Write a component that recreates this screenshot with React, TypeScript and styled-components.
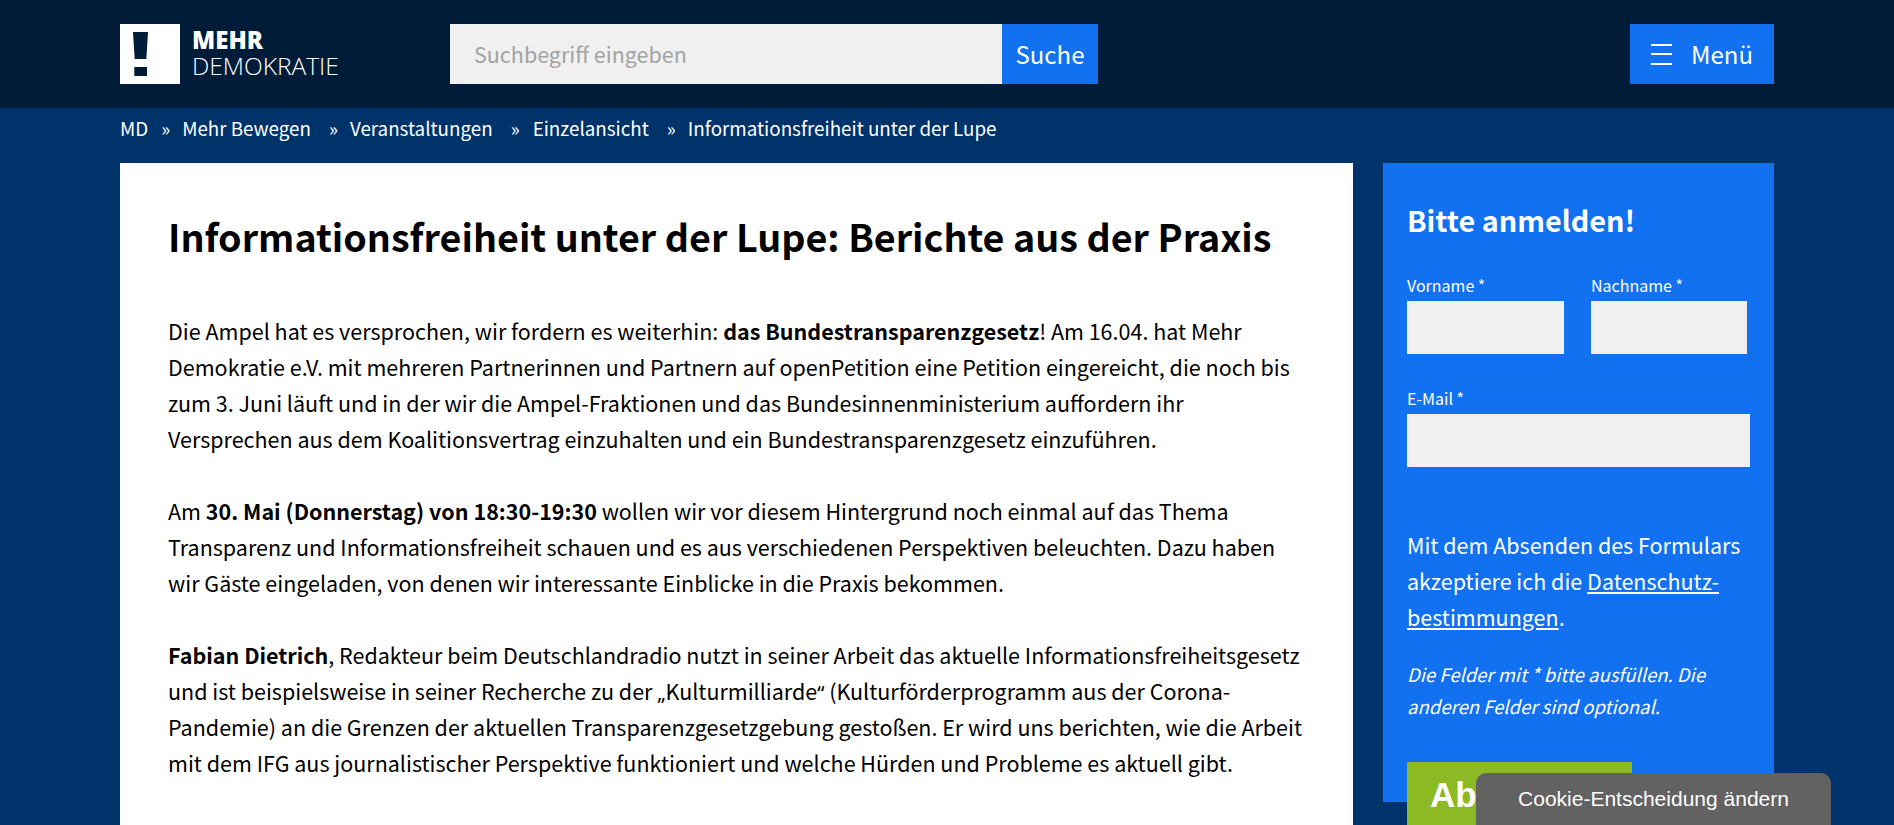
import React from 'react'
import styled, { createGlobalStyle } from 'styled-components'

const sans = `"Noto Sans CJK SC", "Noto Sans", sans-serif`

const GlobalStyle = createGlobalStyle`
  html, body {
    margin: 0;
    height: 825px;
    overflow: hidden;
    background: #00336a;
  }
  * { box-sizing: border-box; }
`

const Page = styled.div`
  font-family: ${sans};
  color: #000;
`

const TopBar = styled.header`
  height: 108px;
  background: #001c38;
  padding: 24px 120px 0;
  display: flex;
  align-items: flex-start;
`

const LogoLink = styled.a`
  display: flex;
  width: 330px;
  height: 60px;
  color: #fff;
`

const LogoMark = styled.div`
  width: 60px;
  height: 60px;
  background: #fff;
  display: flex;
  align-items: center;
  padding-left: 13px;
`

const LogoText = styled.div`
  margin-left: 12px;
  padding-top: 3px;
  display: flex;
  flex-direction: column;
`

const LogoTop = styled.span`
  font-family: "Open Sans", sans-serif;
  font-weight: 800;
  font-size: 24px;
  line-height: 26px;
`

const LogoBottom = styled.span`
  font-family: "Open Sans", sans-serif;
  font-weight: 300;
  font-size: 24.5px;
  line-height: 26px;
`

const SearchForm = styled.form`
  display: flex;
  width: 648px;
  height: 60px;
`

const SearchField = styled.div`
  width: 552px;
  background: #f0f0f0;
  color: #a3a3a3;
  font-size: 21.5px;
  line-height: 59px;
  padding-left: 24px;
`

const SearchButton = styled.div`
  width: 96px;
  background: #1271f0;
  color: #fff;
  font-size: 24px;
  line-height: 60px;
  text-align: center;
`

const MenuButton = styled.div`
  margin-left: auto;
  width: 144px;
  height: 60px;
  background: #1271f0;
  color: #fff;
  font-size: 24px;
  line-height: 58px;
  display: flex;
  align-items: center;
  padding-left: 21px;
  gap: 19px;
`

const Burger = styled.div`
  width: 21px;
  height: 21px;
  border-top: 2px solid #fff;
  border-bottom: 2px solid #fff;
  position: relative;
  &::after {
    content: '';
    position: absolute;
    left: 0;
    right: 0;
    top: 7.5px;
    height: 2px;
    background: #fff;
  }
`

const Crumbs = styled.nav`
  height: 55px;
  padding: 5px 0 0 120px;
  display: flex;
  color: #fff;
  font-size: 18.8px;
  line-height: 30px;
`

const Crumb = styled.span<{ $gap?: number }>`
  margin-right: ${({ $gap }) => $gap ?? 18}px;
`

const Columns = styled.div`
  display: flex;
  padding: 0 120px;
  gap: 30px;
  align-items: flex-start;
`

const Article = styled.main`
  width: 1233px;
  height: 700px;
  background: #fff;
  padding: 48px 48px 0;
`

const Title = styled.h1`
  margin: 0 0 52px;
  font-size: 37.66px;
  line-height: 50px;
  font-weight: 700;
`

const Para = styled.p`
  margin: 0 0 36px;
  font-size: 21.5px;
  line-height: 36px;
`

const Quote = styled.span`
  font-family: "Noto Sans", sans-serif;
  font-size: 20px;
  line-height: 0;
`

const Side = styled.aside`
  width: 391px;
  height: 639px;
  background: #1271f0;
  color: #fff;
  padding: 37px 24px 0;
`

const SideTitle = styled.h2`
  margin: 0 0 33px;
  font-size: 28.8px;
  line-height: 40px;
  font-weight: 700;
`

const NameRow = styled.div`
  display: flex;
  gap: 27px;
`

const Field = styled.div<{ $width: number }>`
  width: ${({ $width }) => $width}px;
  margin-bottom: 32px;
`

const FieldLabel = styled.label`
  display: block;
  font-size: 16px;
  line-height: 24px;
  height: 24px;
  margin-bottom: 4px;
`

const FieldInput = styled.div`
  height: 53px;
  background: #f0f0f0;
`

const Consent = styled.p`
  margin: 60px 0 23px;
  font-size: 21.5px;
  line-height: 36px;
`

const ConsentLink = styled.a`
  color: #fff;
  text-decoration: underline;
`

const Hint = styled.p`
  margin: 0 0 40px;
  font-size: 18.5px;
  line-height: 32px;
  font-style: italic;
`

const SubmitButton = styled.div`
  width: 225px;
  height: 90px;
  background: #8bba25;
  color: #fff;
  font-family: "Liberation Sans", Arial, sans-serif;
  font-weight: 700;
  font-size: 35px;
  line-height: 66px;
  padding-left: 23px;
`

const CookieButton = styled.div`
  position: fixed;
  left: 1476px;
  bottom: 0;
  width: 355px;
  height: 52px;
  background: #626262;
  border-radius: 10px 10px 0 0;
  color: #fff;
  font-family: "Liberation Sans", Arial, sans-serif;
  font-size: 21px;
  line-height: 52px;
  text-align: center;
`

export default function App() {
  return (
    <Page>
      <GlobalStyle />
      <TopBar>
        <LogoLink>
          <LogoMark>
            <svg width="15" height="44" viewBox="0 0 15 44">
              <path d="M0 0H15L13.3 27H1.7Z" fill="#001c38" />
              <rect x="1.3" y="35" width="12.7" height="9" fill="#001c38" />
            </svg>
          </LogoMark>
          <LogoText>
            <LogoTop>MEHR</LogoTop>
            <LogoBottom>DEMOKRATIE</LogoBottom>
          </LogoText>
        </LogoLink>
        <SearchForm>
          <SearchField>Suchbegriff eingeben</SearchField>
          <SearchButton>Suche</SearchButton>
        </SearchForm>
        <MenuButton>
          <Burger />
          Menü
        </MenuButton>
      </TopBar>
      <Crumbs>
        <Crumb $gap={13}>MD</Crumb>
        <Crumb $gap={12}>»</Crumb>
        <Crumb>Mehr Bewegen</Crumb>
        <Crumb $gap={12}>»</Crumb>
        <Crumb>Veranstaltungen</Crumb>
        <Crumb $gap={13}>»</Crumb>
        <Crumb>Einzelansicht</Crumb>
        <Crumb $gap={12}>»</Crumb>
        <Crumb>Informationsfreiheit unter der Lupe</Crumb>
      </Crumbs>
      <Columns>
        <Article>
          <Title>Informationsfreiheit unter der Lupe: Berichte aus der Praxis</Title>
          <Para>
            Die Ampel hat es versprochen, wir fordern es weiterhin: <b>das Bundestransparenzgesetz</b>! Am 16.04. hat Mehr
            Demokratie e.V. mit mehreren Partnerinnen und Partnern auf openPetition eine Petition eingereicht, die noch bis
            zum 3. Juni läuft und in der wir die Ampel-Fraktionen und das Bundesinnenministerium auffordern ihr
            Versprechen aus dem Koalitionsvertrag einzuhalten und ein Bundestransparenzgesetz einzuführen.
          </Para>
          <Para>
            Am <b>30. Mai (Donnerstag) von 18:30-19:30</b> wollen wir vor diesem Hintergrund noch einmal auf das Thema
            Transparenz und Informationsfreiheit schauen und es aus verschiedenen Perspektiven beleuchten. Dazu haben
            wir Gäste eingeladen, von denen wir interessante Einblicke in die Praxis bekommen.
          </Para>
          <Para>
            <b>Fabian Dietrich</b>, Redakteur beim Deutschlandradio nutzt in seiner Arbeit das aktuelle Informationsfreiheitsgesetz
            und ist beispielsweise in seiner Recherche zu der <Quote>„</Quote>Kulturmilliarde<Quote>“</Quote> (Kulturförderprogramm aus der Corona-Pandemie) an die Grenzen der aktuellen Transparenzgesetzgebung gestoßen. Er wird uns berichten, wie die Arbeit
            mit dem IFG aus journalistischer Perspektive funktioniert und welche Hürden und Probleme es aktuell gibt.
          </Para>
        </Article>
        <Side>
          <SideTitle>Bitte anmelden!</SideTitle>
          <NameRow>
            <Field $width={157}>
              <FieldLabel>Vorname *</FieldLabel>
              <FieldInput />
            </Field>
            <Field $width={156}>
              <FieldLabel>Nachname *</FieldLabel>
              <FieldInput />
            </Field>
          </NameRow>
          <Field $width={343}>
            <FieldLabel>E-Mail *</FieldLabel>
            <FieldInput />
          </Field>
          <Consent>
            Mit dem Absenden des Formulars akzeptiere ich die <ConsentLink>Datenschutz-</ConsentLink>
            <br />
            <ConsentLink>bestimmungen</ConsentLink>.
          </Consent>
          <Hint>Die Felder mit * bitte ausfüllen. Die anderen Felder sind optional.</Hint>
          <SubmitButton>Absenden</SubmitButton>
        </Side>
      </Columns>
      <CookieButton>Cookie-Entscheidung ändern</CookieButton>
    </Page>
  )
}
